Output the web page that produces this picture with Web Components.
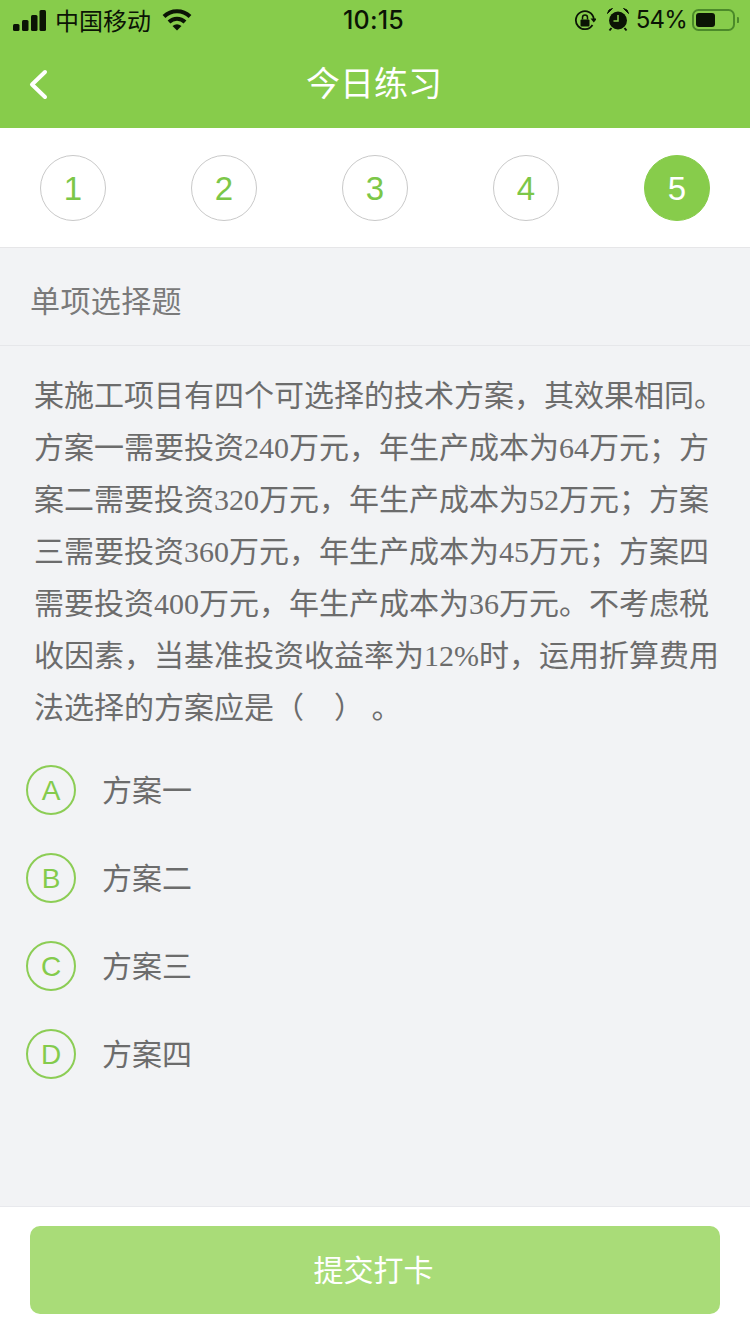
<!DOCTYPE html>
<html lang="zh-CN">
<head>
<meta charset="utf-8">
<title>今日练习</title>
<style>
html,body{margin:0;padding:0;height:100%}
body{width:750px;height:1334px;overflow:hidden;background:#f2f3f5;font-family:"Noto Sans CJK SC",sans-serif}
quiz-app{height:1334px}
</style>
</head>
<body>
<quiz-app>
  <status-bar></status-bar>
  <nav-header>今日练习</nav-header>
  <step-row>
    <step-dot>1</step-dot><step-dot>2</step-dot><step-dot>3</step-dot><step-dot>4</step-dot><step-dot active>5</step-dot>
  </step-row>
  <section-title>单项选择题</section-title>
  <question-text>某施工项目有四个可选择的技术方案，其效果相同。方案一需要投资240万元，年生产成本为64万元；方案二需要投资320万元，年生产成本为52万元；方案三需要投资360万元，年生产成本为45万元；方案四需要投资400万元，年生产成本为36万元。不考虑税收因素，当基准投资收益率为12%时，运用折算费用法选择的方案应是（&nbsp;&nbsp;&nbsp;&nbsp;）&nbsp;。</question-text>
  <option-list>
    <option-row letter="A">方案一</option-row>
    <option-row letter="B">方案二</option-row>
    <option-row letter="C">方案三</option-row>
    <option-row letter="D">方案四</option-row>
  </option-list>
  <submit-bar>提交打卡</submit-bar>
</quiz-app>
<script>
function def(name, html){
  customElements.define(name, class extends HTMLElement{
    constructor(){
      super();
      const r=this.attachShadow({mode:'open'});
      r.innerHTML=typeof html==='function'?html(this):html;
    }
  });
}
def('quiz-app',`<style>:host{display:flex;flex-direction:column;width:750px}</style><slot></slot>`);
def('status-bar',`<style>
:host{display:grid;grid-template-columns:1fr auto 1fr;align-items:center;height:40px;background:#87cc4b;color:#0b1405;font:24px/40px "Liberation Sans","Noto Sans CJK SC",sans-serif}
.l,.r{display:flex;align-items:center}
.l{padding-left:13px}
.carrier{margin-left:7px;font-family:"Noto Sans CJK SC",sans-serif;font-size:24px}
.wifi{margin-left:11px}
.time{font-family:"Inter","Liberation Sans",sans-serif;font-weight:500;font-size:25px;letter-spacing:.2px;margin-left:-3px}
.r{justify-content:flex-end;padding-right:11px}
.pct{margin-left:7px;font-size:24px;font-family:"Inter","Liberation Sans",sans-serif;letter-spacing:-.8px}
.alarm{margin-left:10px}
.lock{margin-right:1px;margin-top:2px}
.bat{margin-left:5px}
svg{display:block}
</style>
<div class="l">
<svg width="35" height="21" viewBox="0 0 35 21"><rect x="0" y="14" width="6.500" height="7" rx="1.500" fill="#0b1405"/><rect x="9" y="10" width="6.500" height="11" rx="1.500" fill="#0b1405"/><rect x="18" y="5" width="6.500" height="16" rx="1.500" fill="#0b1405"/><rect x="26.500" y="0" width="6.500" height="21" rx="1.500" fill="#0b1405"/></svg>
<span class="carrier">中国移动</span>
<svg class="wifi" width="30" height="22" viewBox="0 0 30 22"><path d="M2 7.500A18.500 18.500 0 0 1 28 7.500" fill="none" stroke="#0b1405" stroke-width="4"/><path d="M7 13A11.500 11.500 0 0 1 23 13" fill="none" stroke="#0b1405" stroke-width="4"/><path d="M10.500 17Q15 13.500 19.500 17L15 21.500Z" fill="#0b1405"/></svg>
</div>
<div class="time">10:15</div>
<div class="r">
<svg class="lock" width="22" height="22" viewBox="0 0 22 22"><path d="M18.500 15A9 9 0 1 1 19.800 9" fill="none" stroke="#0b1405" stroke-width="1.800"/><path d="M16.500 8.500h6.500l-3.200 4z" fill="#0b1405"/><rect x="6.500" y="9.500" width="9" height="7" rx="1" fill="#0b1405"/><path d="M8.500 9.500V7.500a2.500 2.500 0 0 1 5 0v2" fill="none" stroke="#0b1405" stroke-width="1.500"/></svg>
<svg class="alarm" width="22" height="24" viewBox="0 0 22 24"><circle cx="11" cy="12.500" r="9" fill="#0b1405"/><path d="M11 7V13H6.500" fill="none" stroke="#87cc4b" stroke-width="1.500"/><path d="M.5 5.500Q1 1 5.500 .5ZM21.500 5.500Q21 1 16.500 .5Z" fill="#0b1405" stroke="#0b1405" stroke-width="1"/><path d="M4.500 20L2.500 22.500M17.500 20L19.500 22.500" stroke="#0b1405" stroke-width="2" fill="none"/></svg>
<span class="pct">54%</span>
<svg class="bat" width="47" height="22" viewBox="0 0 47 22"><rect x="1" y="1" width="41" height="20" rx="5.500" fill="none" stroke="#4c8a2a" stroke-width="2"/><rect x="4" y="4" width="19" height="14" rx="3" fill="#0b1405"/><path d="M45 8a3 3 0 0 1 0 6z" fill="#4c8a2a"/></svg>
</div>`);
def('nav-header',`<style>
:host{display:grid;grid-template-columns:1fr auto 1fr;align-items:center;height:88px;background:#87cc4b;color:#fff;font:34px/1.2 "Noto Sans CJK SC",sans-serif}
.back{padding-left:28px;display:flex}
svg{display:block}
.t{margin:0 0 3px -2px}
</style>
<div class="back"><svg width="20" height="32" viewBox="0 0 20 32"><path d="M17 4L4 16.500L17 29" fill="none" stroke="#fff" stroke-width="4" stroke-linecap="round" stroke-linejoin="round"/></svg></div>
<div class="t"><slot></slot></div><div></div>`);
def('step-row',`<style>
:host{display:flex;justify-content:space-between;align-items:center;box-sizing:border-box;height:120px;padding:1px 40px 0;background:#fff;border-bottom:1px solid #e6e6e8}
</style><slot></slot>`);
def('step-dot',`<style>
:host{display:flex;align-items:center;justify-content:center;box-sizing:border-box;width:66px;height:66px;border-radius:50%;border:1px solid #c9c9c9;color:#7cc748;font:33px/1 "Liberation Sans",sans-serif}
:host([active]){background:#87cc4b;border-color:#87cc4b;color:#fff}
</style><slot></slot>`);
def('section-title',`<style>
:host{display:flex;align-items:center;box-sizing:border-box;height:98px;padding:4px 0 0 30px;color:#7a7a7a;font:30px/1 "Noto Sans CJK SC",sans-serif;letter-spacing:.4px;border-bottom:1px solid #e6e7ea}
</style><slot></slot>`);
def('question-text',`<style>
:host{display:block;padding:24px 20px 0 34px;color:#6c6c6c;font:30px/52px "Liberation Serif","Noto Sans CJK SC",serif;word-break:break-all}
</style><slot></slot>`);
def('option-list',`<style>:host{display:flex;flex-direction:column;flex:1;padding-top:12px}</style><slot></slot>`);
def('option-row',el=>`<style>
:host{display:flex;align-items:center;height:88px;padding-left:26px;color:#6c6c6c;font:30px/1.2 "Noto Sans CJK SC",sans-serif}
.c{display:flex;align-items:center;justify-content:center;box-sizing:border-box;width:50px;height:50px;padding-top:2px;border-radius:50%;border:2px solid #8ccd55;color:#84cb4c;font:28px/1 "Liberation Sans",sans-serif;margin-right:26px}
.x{margin-bottom:4px}
</style><span class="c">${el.getAttribute('letter')}</span><span class="x"><slot></slot></span>`);
def('submit-bar',`<style>
:host{display:block;box-sizing:border-box;height:128px;padding:19px 30px 20px;background:#fff;border-top:1px solid #e8e9ed}
.b{display:flex;align-items:center;justify-content:center;box-sizing:border-box;height:88px;padding:0 3px 4px 0;border-radius:10px;background:#a9dc78;color:#fff;font:30px/1 "Noto Sans CJK SC",sans-serif}
</style><div class="b"><slot></slot></div>`);
</script>
</body>
</html>
